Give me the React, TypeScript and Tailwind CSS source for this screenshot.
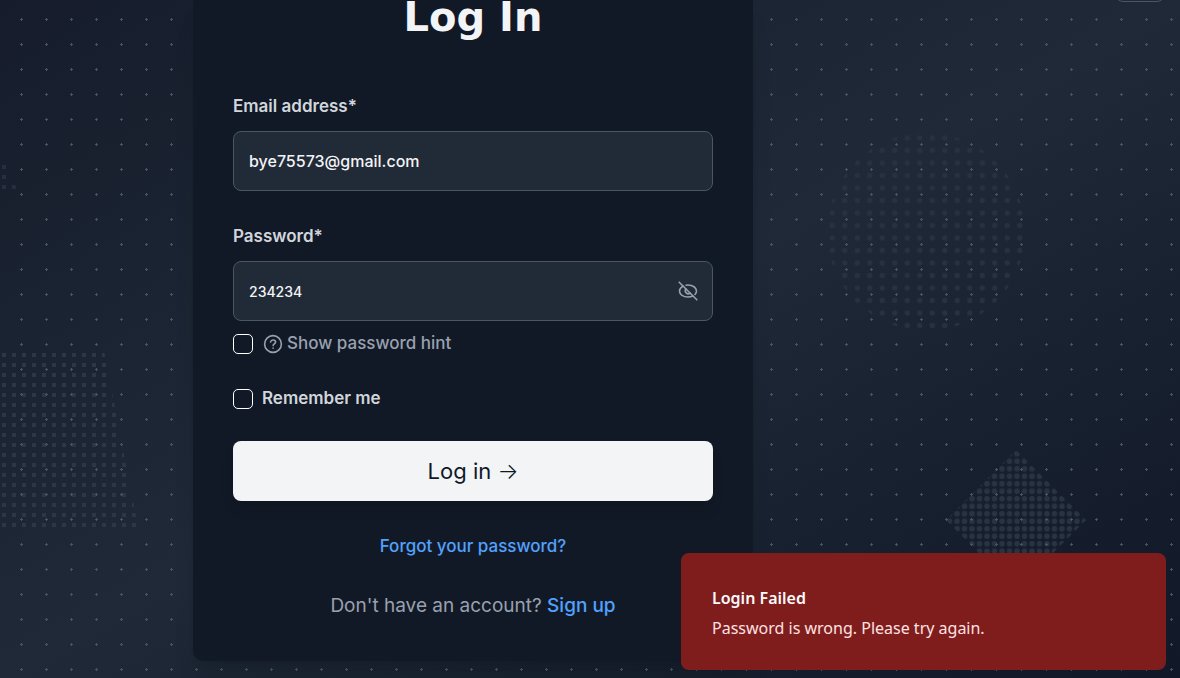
import React, { useState } from "react";

function Backdrop() {
  return (
    <svg aria-hidden="true" className="pointer-events-none absolute inset-0 h-full w-full">
      <defs>
        <pattern id="plus" x="20" y="18" width="25" height="25" patternUnits="userSpaceOnUse">
          <path d="M0 1h3v1H0zM1 0h1v3H1z" fill="#4a5361" shapeRendering="crispEdges" />
        </pattern>
        <pattern id="squares" x="2" y="3" width="10" height="10" patternUnits="userSpaceOnUse">
          <rect width="4" height="4" fill="#2c3645" />
        </pattern>
        <pattern id="squares-small" x="2" y="5" width="10" height="10" patternUnits="userSpaceOnUse">
          <rect width="4" height="4" fill="#252f3e" />
        </pattern>
        <pattern id="rounds" x="826" y="131.75" width="12.5" height="12.5" patternUnits="userSpaceOnUse">
          <circle cx="6.25" cy="6.25" r="2.6" fill="#273140" />
        </pattern>
        <pattern id="diamonds" x="1013.25" y="450" width="7.5" height="7.5" patternUnits="userSpaceOnUse">
          <circle cx="3.75" cy="3.75" r="2.75" fill="#2a3342" />
        </pattern>
      </defs>
      <path d="M0 353H104.5L138 527H0z" fill="url(#squares)" />
      <path d="M0 163H6L17 190H0z" fill="url(#squares-small)" />
      <circle cx="926" cy="231.75" r="99" fill="url(#rounds)" />
      <path d="M1016 450 1086 520 1016 590 946 520z" fill="url(#diamonds)" />
      <rect width="100%" height="100%" fill="url(#plus)" />
    </svg>
  );
}

function EyeSlash() {
  return (
    <svg
      viewBox="0 0 20 20"
      className="size-5"
      fill="none"
      stroke="currentColor"
      strokeWidth="1.6"
      strokeLinecap="round"
      aria-hidden="true"
    >
      <path d="M1.2 1.2 18.8 18.8" />
      <path d="M5 5.1C2.9 6.300 1.500 8 1.500 10c0 3.500 3.800 6 8.500 6 1.800 0 3.500-.4 4.900-1" />
      <path d="M8 4.200c.6-.1 1.300-.2 2-.2 4.700 0 8.500 2.600 8.500 6 0 1.300-.6 2.500-1.500 3.500" />
      <path d="M7.900 7.900a3 3 0 0 0 4.200 4.200" />
    </svg>
  );
}

function QuestionCircle() {
  return (
    <svg
      viewBox="0 0 20 20"
      className="mr-1 ml-2.5 size-5"
      fill="none"
      stroke="currentColor"
      strokeWidth="1.6"
      strokeLinecap="round"
      strokeLinejoin="round"
      aria-hidden="true"
    >
      <circle cx="10" cy="10" r="8.4" />
      <path d="M7.600 7.900C7.900 6.700 8.900 6 10.100 6c1.400 0 2.500.9 2.500 2.100 0 1.700-2.500 1.900-2.500 3.500" />
      <path d="M10.100 14.100v.1" />
    </svg>
  );
}

const field =
  "h-[60px] w-full rounded-lg border border-gray-600 bg-[#212a37] px-[15px] font-medium text-gray-100 outline-none";
const box = "size-5 shrink-0 appearance-none rounded-[5px] border border-white checked:bg-blue-500";

export default function App() {
  const [email, setEmail] = useState("bye75573@gmail.com");
  const [password, setPassword] = useState("234234");
  const [visible, setVisible] = useState(true);

  return (
    <div className="relative min-h-screen overflow-hidden bg-[linear-gradient(to_bottom_right,#161c2b,#1a2331_25%,#1f2937_50%,#18212f_72%,#111827)] font-['Inter','Liberation_Sans',sans-serif]">
      <Backdrop />
      <button
        type="button"
        aria-label="Menu"
        className="absolute -top-11 right-[15px] h-[46px] w-[50px] rounded-lg border border-gray-600"
      />

      <main className="relative flex justify-center pr-[234px] pb-[17px]">
        <form
          onSubmit={(e) => e.preventDefault()}
          className="w-full max-w-[560px] rounded-b-[10px] bg-[#121926] px-10 pb-10 shadow-xl"
        >
          <h1 className="pb-[54px] text-center font-['DejaVu_Sans','Inter',sans-serif] text-[40px] leading-[34px] font-bold text-gray-100">
            Log In
          </h1>

          <label htmlFor="email" className="block pt-1.5 pb-[13px] text-[17px] leading-6 font-semibold text-gray-300">
            Email address*
          </label>
          <input
            id="email"
            type="email"
            value={email}
            onChange={(e) => setEmail(e.target.value)}
            className={`${field} text-base`}
          />

          <label htmlFor="password" className="mt-8 block pt-px pb-[13px] text-[17px] leading-6 font-semibold text-gray-300">
            Password*
          </label>
          <div className="relative">
            <input
              id="password"
              type={visible ? "text" : "password"}
              value={password}
              onChange={(e) => setPassword(e.target.value)}
              className={`${field} text-sm`}
            />
            <button
              type="button"
              aria-label="Toggle password visibility"
              onClick={() => setVisible(!visible)}
              className="absolute inset-y-0 right-[15px] flex items-center text-gray-400"
            >
              <EyeSlash />
            </button>
          </div>

          <label className="mt-[11px] flex h-6 items-center text-[17px] font-medium text-gray-400">
            <input type="checkbox" className={box} />
            <QuestionCircle />
            Show password hint
          </label>
          <label className="mt-[31px] flex h-6 items-center gap-[9px] text-[17px] font-semibold text-gray-300">
            <input type="checkbox" className={box} />
            Remember me
          </label>

          <button
            type="submit"
            className="mt-[30px] h-[60px] w-full rounded-lg bg-gray-100 text-[22px] text-gray-900 shadow-lg"
          >
            Log in <span className="font-light">→</span>
          </button>

          <p className="mt-[31px] text-center text-[17px] leading-7 font-medium">
            <a href="#forgot" className="text-blue-400">
              Forgot your password?
            </a>
          </p>
          <p className="mt-8 pb-px text-center text-[19px] leading-7 text-gray-400">
            Don't have an account?{" "}
            <a href="#signup" className="font-medium text-blue-400">
              Sign up
            </a>
          </p>
        </form>
      </main>

      <div
        role="alert"
        className="absolute right-3.5 bottom-2 w-[485px] rounded-lg bg-[#7f1d1d] px-[31px] pt-[31px] pb-7 font-['Noto_Sans','Open_Sans',sans-serif] text-base"
      >
        <p className="leading-7 font-semibold text-gray-50">Login Failed</p>
        <p className="mt-0.5 leading-7 text-red-100">Password is wrong. Please try again.</p>
      </div>
    </div>
  );
}
